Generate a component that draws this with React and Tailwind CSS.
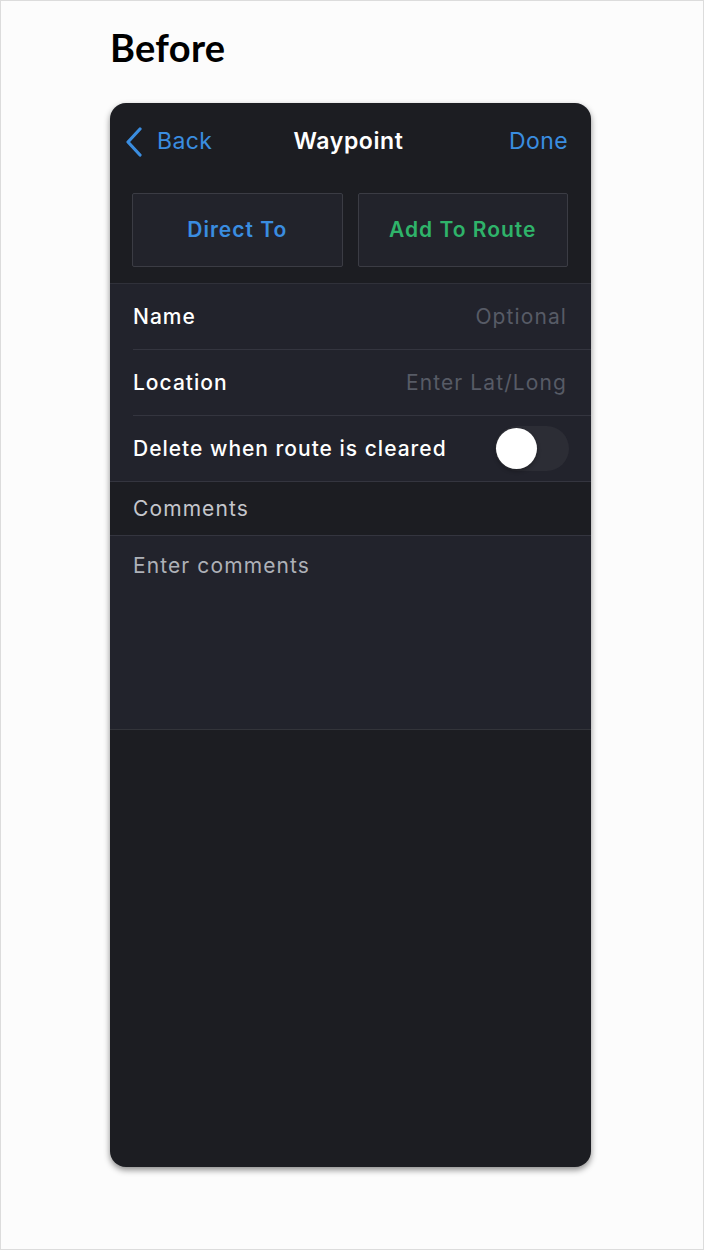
const ChevronLeft = () => (
  <svg width="18" height="30" viewBox="0 0 18 30" fill="none">
    <path
      d="M15 2 L3 15 L15 28"
      stroke="#3a8de0"
      strokeWidth="3.2"
      strokeLinecap="round"
      strokeLinejoin="round"
    />
  </svg>
);

const Row = ({ label, placeholder, last = false }) => (
  <div className="pl-[23px]">
    <div
      className={
        'h-[66px] flex items-center justify-between pr-[24px] ' +
        (last ? '' : 'border-b border-[#34353f]')
      }
    >
      <span className="text-[21px] font-medium text-white tracking-[1px]">{label}</span>
      <span className="text-[21px] text-[#575b66] tracking-[1.1px]">{placeholder}</span>
    </div>
  </div>
);

const App = () => {
  return (
    <div className="w-[704px] h-[1250px] bg-[#fcfcfc] border border-[#dcdcdc] font-['Inter',sans-serif]">
      <div className="pl-[109px] pt-[22px]">
        <h1 className="text-[38px] leading-[48px] font-bold text-black font-['Lato',sans-serif] tracking-[0.3px]">
          Before
        </h1>

        <div className="mt-[32px] w-[481px] h-[1064px] rounded-[16px] bg-[#1c1d22] overflow-hidden shadow-[0_3px_6px_rgba(0,0,0,0.45)] flex flex-col">
          {/* nav bar */}
          <div className="h-[77px] flex items-center px-[15px] pr-[23px]">
            <div className="flex-1 flex items-center gap-[14px]">
              <ChevronLeft />
              <span className="text-[23px] text-[#3a8de0] tracking-[0.4px]">Back</span>
            </div>
            <span className="text-[23px] font-semibold text-white tracking-[0.6px] ml-[4px]">Waypoint</span>
            <div className="flex-1 flex justify-end">
              <span className="text-[23px] text-[#3a8de0] tracking-[0.4px]">Done</span>
            </div>
          </div>

          {/* action buttons */}
          <div className="flex gap-[15px] px-[22px] pr-[23px] pt-[13px] pb-[16px] border-b border-[#30313a]">
            <button className="flex-1 h-[74px] rounded-[2px] border border-[#3b3c44] bg-[#22232b] text-[21px] font-semibold text-[#3a8de0] tracking-[1px]">
              Direct To
            </button>
            <button className="flex-1 h-[74px] rounded-[2px] border border-[#3b3c44] bg-[#22232b] text-[21px] font-semibold text-[#2fb36a] tracking-[1px]">
              Add To Route
            </button>
          </div>

          {/* fields */}
          <div className="bg-[#22232c] border-b border-[#34353f]">
            <Row label="Name" placeholder="Optional" />
            <Row label="Location" placeholder="Enter Lat/Long" />
            <div className="pl-[23px] h-[65px] flex items-center justify-between pr-[22px]">
              <span className="text-[21px] font-medium text-white tracking-[1px]">Delete when route is cleared</span>
              <div className="w-[74px] h-[45px] rounded-full bg-[#2c2d35] flex items-center pl-[1px]">
                <div className="w-[41px] h-[41px] rounded-full bg-white shadow-[0_2px_4px_rgba(0,0,0,0.3)]" />
              </div>
            </div>
          </div>

          {/* comments header */}
          <div className="h-[54px] flex items-center pl-[23px] border-b border-[#34353f]">
            <span className="text-[21px] text-[#c4c6cc] tracking-[1.1px]">Comments</span>
          </div>

          {/* comments box */}
          <div className="h-[194px] bg-[#22232c] border-b border-[#33343a] pl-[23px] pt-[14px]">
            <span className="text-[21px] text-[#aeb1b8] tracking-[1.1px]">Enter comments</span>
          </div>

          <div className="flex-1" />
        </div>
      </div>
    </div>
  );
};

export default App;
